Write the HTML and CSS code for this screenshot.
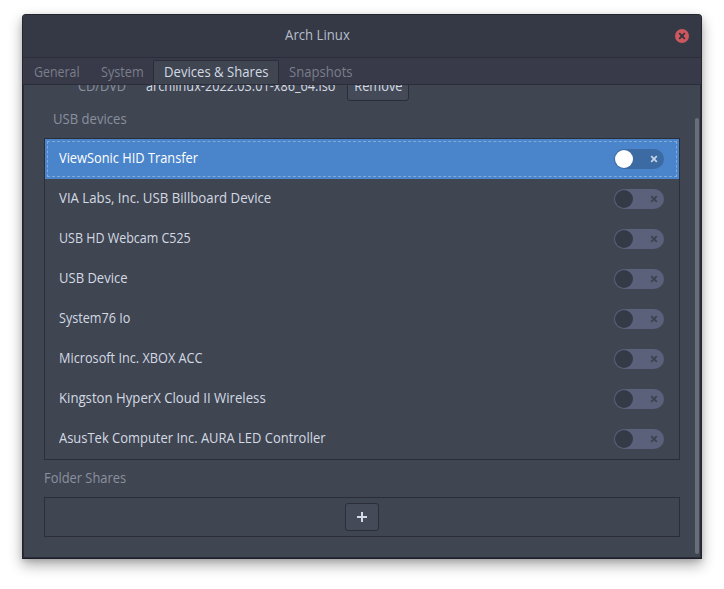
FILE: index.html
```html
<!DOCTYPE html>
<html lang="en">
<head>
<meta charset="utf-8">
<title>Arch Linux</title>
<link rel="stylesheet" href="styles.css">
</head>
<body>
<svg class="defs" width="0" height="0" aria-hidden="true"><symbol id="x" viewBox="0 0 8 8"><path d="M1.2 1.2 6.8 6.8M6.8 1.2 1.2 6.8" fill="none" stroke="currentColor" stroke-width="1.8"/></symbol></svg>
<main class="window">
  <header class="titlebar"><span></span><h1><span class="t title-text">Arch Linux</span></h1><button class="close" aria-label="Close"><svg width="8" height="8"><use href="#x"/></svg></button></header>
  <nav class="tabs">
    <a class="tab general"><span class="t">General</span></a><a class="tab system"><span class="t">System</span></a><a class="tab active"><span class="t">Devices &amp; Shares</span></a><a class="tab snapshots"><span class="t">Snapshots</span></a>
  </nav>
  <section class="body">
    <div class="content">
      <div class="drive"><span class="dim cd"><span class="t">CD/DVD</span></span><span class="iso"><span class="t">archlinux-2022.03.01-x86_64.iso</span></span><button class="btn remove"><span class="t">Remove</span></button></div>
      <h2 class="usb-title"><span class="t">USB devices</span></h2>
      <ul class="list">
        <li class="selected"><span class="t d1">ViewSonic HID Transfer</span><i class="switch"><svg width="8" height="8"><use href="#x"/></svg></i></li>
        <li><span class="t d2">VIA Labs, Inc. USB Billboard Device</span><i class="switch"><svg width="8" height="8"><use href="#x"/></svg></i></li>
        <li><span class="t d3">USB HD Webcam C525</span><i class="switch"><svg width="8" height="8"><use href="#x"/></svg></i></li>
        <li><span class="t d4">USB Device</span><i class="switch"><svg width="8" height="8"><use href="#x"/></svg></i></li>
        <li><span class="t d5">System76 Io</span><i class="switch"><svg width="8" height="8"><use href="#x"/></svg></i></li>
        <li><span class="t d6">Microsoft Inc. XBOX ACC</span><i class="switch"><svg width="8" height="8"><use href="#x"/></svg></i></li>
        <li><span class="t d7">Kingston HyperX Cloud II Wireless</span><i class="switch"><svg width="8" height="8"><use href="#x"/></svg></i></li>
        <li><span class="t d8">AsusTek Computer Inc. AURA LED Controller</span><i class="switch"><svg width="8" height="8"><use href="#x"/></svg></i></li>
      </ul>
      <h2 class="folder-title"><span class="t">Folder Shares</span></h2>
      <div class="shares"><button class="btn add" aria-label="Add"><svg width="10" height="10"><path d="M4 0h2v4h4v2H6v4H4V6H0V4h4z" fill="#d3dae3"/></svg></button></div>
    </div>
    <div class="scrollbar"></div>
  </section>
</main>
</body>
</html>
```
FILE: styles.css
```css
* { box-sizing: border-box; }
body {
  margin: 0;
  padding: 14px 22px 30px;
  height: 589px;
  overflow: hidden;
  background: #fff;
  font: 14px/20px "Open Sans", "Noto Sans", sans-serif;
  color: #d3dae3;
  white-space: nowrap;
}
h1, h2, ul { margin: 0; padding: 0; font-size: inherit; font-weight: 400; }
button { margin: 0; padding: 0; font: inherit; color: inherit; }
svg { display: block; }
.defs { position: absolute; }

/* Labels are drawn slightly condensed */
.t { display: inline-block; transform: scaleX(var(--w, .92)); transform-origin: 0 50%; }
.title-text { --w: .94; }
.general { --w: .885; }
.system { --w: .905; }
.active { --w: .937; }
.snapshots { --w: .935; }
.cd { --w: .91; }
.iso { --w: .908; }
.remove { --w: .915; }
.usb-title { --w: .935; }
.d1 { --w: .915; }
.d2 { --w: .944; }
.d3 { --w: .89; }
.d4 { --w: .93; }
.d5 { --w: .9; }
.d6 { --w: .908; }
.d7 { --w: .941; }
.d8 { --w: .925; }

.window {
  display: flex;
  flex-direction: column;
  width: 680px;
  height: 545px;
  border: 1px solid #24262f;
  border-bottom-color: #1c1d26;
  border-radius: 4px 4px 0 0;
  background: #404552;
  box-shadow: 0 6px 14px rgba(0, 0, 0, .33), 0 2px 5px rgba(0, 0, 0, .12);
  overflow: hidden;
}
.titlebar {
  display: grid;
  grid-template-columns: 80px 1fr 80px;
  align-items: center;
  height: 43px;
  background: #353945;
  border-bottom: 1px solid #2b2e39;
  color: #b5bdcb;
}
h1 { text-align: center; padding-right: 90px; margin-top: -2px; }
h1 .t { transform-origin: 50% 50%; }
.close {
  display: grid;
  place-items: center;
  justify-self: end;
  width: 14px;
  height: 14px;
  margin-right: 12px;
  border: 0;
  border-radius: 50%;
  background: #cc575d;
  color: #2f343f;
}
.tabs { display: flex; height: 27px; padding-top: 2px; background: #383a49; border-bottom: 1px solid #2b2e39; color: #7a7f8b; }
.tab { display: block; padding-top: 2px; }
.general { width: 67px; padding-left: 11px; }
.system { width: 63px; padding-left: 11px; }
.active { flex: none; width: 126px; height: 24px; padding: 1px 0 0 10px; border: 1px solid #2b2e39; border-bottom: 0; border-radius: 2px 2px 0 0; background: #404552; color: #d3dae3; }
.snapshots { padding-left: 10px; }
.body { display: flex; justify-content: space-between; flex: 1; min-height: 0; overflow: hidden; border: solid #2b2c3a; border-width: 0 1px 1px; }
.content { width: 656px; padding-left: 20px; }
.drive { display: flex; height: 28px; margin-top: -12px; padding-left: 34px; }
.drive > span { flex: none; padding-top: 3px; }
.cd { width: 68px; }
.iso { width: 201px; }
.dim, h2 { color: #8a909e; }
.btn { display: grid; place-items: center; border: 1px solid #2b2e39; border-radius: 3px; background: #444a58; }
.remove { width: 62px; height: 28px; }
.remove .t { margin-top: -2px; transform-origin: 50% 50%; }
.usb-title { height: 37px; padding: 8px 0 0 9px; }
.list { list-style: none; width: 636px; border: 1px solid #2b2e39; }
.list li { display: flex; align-items: center; justify-content: space-between; height: 40px; padding: 0 15px 0 14px; }
.list .t { margin-top: -2px; }
.selected { color: #fff; background: #4a85cb; outline: 1px dashed #80a9dc; outline-offset: -3px; }
.switch { display: flex; align-items: center; justify-content: space-between; width: 50px; height: 20px; padding: 0 6px 0 1px; border-radius: 10px; background: #5b617b; color: #3d4250; }
.switch::before { content: ""; width: 18px; height: 18px; border-radius: 50%; background: #353a47; }
.selected .switch { background: #3c6ba3; color: #c4d3e7; }
.selected .switch::before { background: #fff; }
.folder-title { height: 37px; padding-top: 8px; }
.shares { display: flex; align-items: center; justify-content: center; width: 636px; height: 40px; border: 1px solid #2b2e39; }
.add { width: 34px; height: 28px; }
.scrollbar { width: 4px; height: 436px; margin: 33px 1px 0 0; border-radius: 2px; background: #696e7b; }
```
